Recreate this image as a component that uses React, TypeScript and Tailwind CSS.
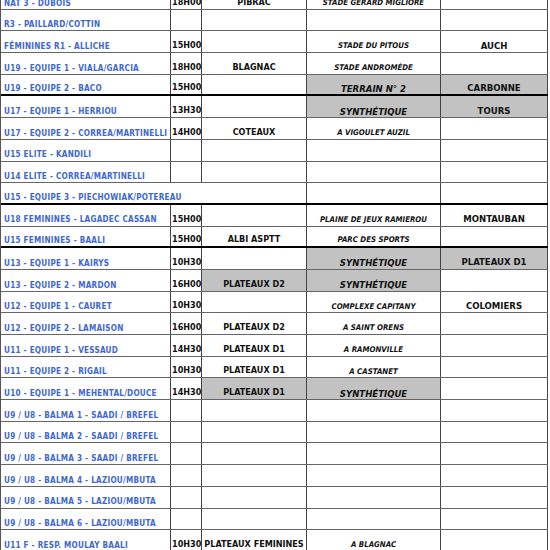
import React from 'react';

type Row = {
  team: string;
  time?: string;
  place?: string;
  venue?: string;
  city?: string;
  grayPlace?: boolean;
  grayVenue?: boolean;
  grayCity?: boolean;
  thick?: boolean;
  span?: boolean;
};

const rows: Row[] = [
  { team: 'NAT 3 - DUBOIS', time: '18H00', place: 'PIBRAC', venue: 'STADE GERARD MIGLIORE' },
  { team: 'R3 - PAILLARD/COTTIN' },
  { team: 'FÉMININES R1 - ALLICHE', time: '15H00', venue: 'STADE DU PITOUS', city: 'AUCH' },
  { team: 'U19 - EQUIPE 1 - VIALA/GARCIA', time: '18H00', place: 'BLAGNAC', venue: 'STADE ANDROMÈDE' },
  { team: 'U19 - EQUIPE 2 - BACO', time: '15H00', venue: 'TERRAIN N° 2', city: 'CARBONNE', grayVenue: true, grayCity: true, thick: true },
  { team: 'U17 - EQUIPE 1 - HERRIOU', time: '13H30', venue: 'SYNTHÉTIQUE', city: 'TOURS', grayVenue: true, grayCity: true },
  { team: 'U17 - EQUIPE 2 - CORREA/MARTINELLI', time: '14H00', place: 'COTEAUX', venue: 'A VIGOULET AUZIL' },
  { team: 'U15 ELITE - KANDILI' },
  { team: 'U14 ELITE - CORREA/MARTINELLI' },
  { team: 'U15 - EQUIPE 3 - PIECHOWIAK/POTEREAU', span: true, thick: true },
  { team: 'U18 FEMININES - LAGADEC CASSAN', time: '15H00', venue: 'PLAINE DE JEUX RAMIEROU', city: 'MONTAUBAN' },
  { team: 'U15 FEMININES - BAALI', time: '15H00', place: 'ALBI ASPTT', venue: 'PARC DES SPORTS', thick: true },
  { team: 'U13 - EQUIPE 1 - KAIRYS', time: '10H30', venue: 'SYNTHÉTIQUE', city: 'PLATEAUX D1', grayVenue: true, grayCity: true },
  { team: 'U13 - EQUIPE 2 - MARDON', time: '16H00', place: 'PLATEAUX D2', venue: 'SYNTHÉTIQUE', grayPlace: true, grayVenue: true },
  { team: 'U12 - EQUIPE 1 - CAURET', time: '10H30', venue: 'COMPLEXE CAPITANY', city: 'COLOMIERS' },
  { team: 'U12 - EQUIPE 2 - LAMAISON', time: '16H00', place: 'PLATEAUX D2', venue: 'A SAINT ORENS' },
  { team: 'U11 - EQUIPE 1 - VESSAUD', time: '14H30', place: 'PLATEAUX D1', venue: 'A RAMONVILLE' },
  { team: 'U11 - EQUIPE 2 - RIGAIL', time: '10H30', place: 'PLATEAUX D1', venue: 'A CASTANET' },
  { team: 'U10 - EQUIPE 1 - MEHENTAL/DOUCE', time: '14H30', place: 'PLATEAUX D1', venue: 'SYNTHÉTIQUE', grayPlace: true, grayVenue: true },
  { team: 'U9 / U8 - BALMA 1 - SAADI / BREFEL' },
  { team: 'U9 / U8 - BALMA 2 - SAADI / BREFEL' },
  { team: 'U9 / U8 - BALMA 3 - SAADI / BREFEL' },
  { team: 'U9 / U8 - BALMA 4 - LAZIOU/MBUTA' },
  { team: 'U9 / U8 - BALMA 5 - LAZIOU/MBUTA' },
  { team: 'U9 / U8 - BALMA 6 - LAZIOU/MBUTA' },
  { team: 'U11 F - RESP. MOULAY BAALI', time: '10H30', place: 'PLATEAUX FEMININES', venue: 'A BLAGNAC' },
];

const font = "font-['DejaVu_Sans_Condensed','DejaVu_Sans',sans-serif]";

export default function App() {
  return (
    <div className={`w-[550px] h-[550px] overflow-hidden bg-white ${font}`}>
      <div className="-mt-[12px] w-[548px] border-l border-[#555]">
        {rows.map((r, i) => {
          const bottom = r.thick ? 'border-b-2 border-b-black' : 'border-b border-b-[#666]';
          return (
            <div key={i} className={`flex h-[21.7px] ${bottom}`}>
              <div
                className={`${r.span ? 'w-[201px]' : 'w-[170px] border-r border-[#444]'} flex items-end pb-[2px] pl-[3px] whitespace-nowrap text-[8.1px] font-bold leading-none tracking-[0.25px] text-[#4068cc]`}
              >
                {r.team}
              </div>
              {!r.span && (
                <div className="w-[31px] border-r border-[#444] flex items-end pb-[2px] pl-[1px] text-[9px] font-bold leading-none text-[#111]">
                  {r.time}
                </div>
              )}
              <div
                className={`w-[105px] border-r border-[#444] flex items-end justify-center pb-[2px] whitespace-nowrap text-[9px] font-bold leading-none text-[#111] ${r.grayPlace ? 'bg-[#c2c2c2]' : ''}`}
              >
                {r.place}
              </div>
              <div
                className={`w-[134px] border-r border-[#444] flex items-end justify-center whitespace-nowrap font-bold italic leading-none text-[#111] ${r.grayVenue ? 'bg-[#c2c2c2] text-[9.5px] pb-[1px]' : 'text-[7.8px] pb-[2px]'}`}
              >
                {r.venue}
              </div>
              <div
                className={`w-[107px] border-r border-[#444] flex items-end justify-center pb-[2px] whitespace-nowrap text-[9.5px] font-bold leading-none text-[#111] ${r.grayCity ? 'bg-[#c2c2c2]' : ''}`}
              >
                {r.city}
              </div>
            </div>
          );
        })}
      </div>
    </div>
  );
}
